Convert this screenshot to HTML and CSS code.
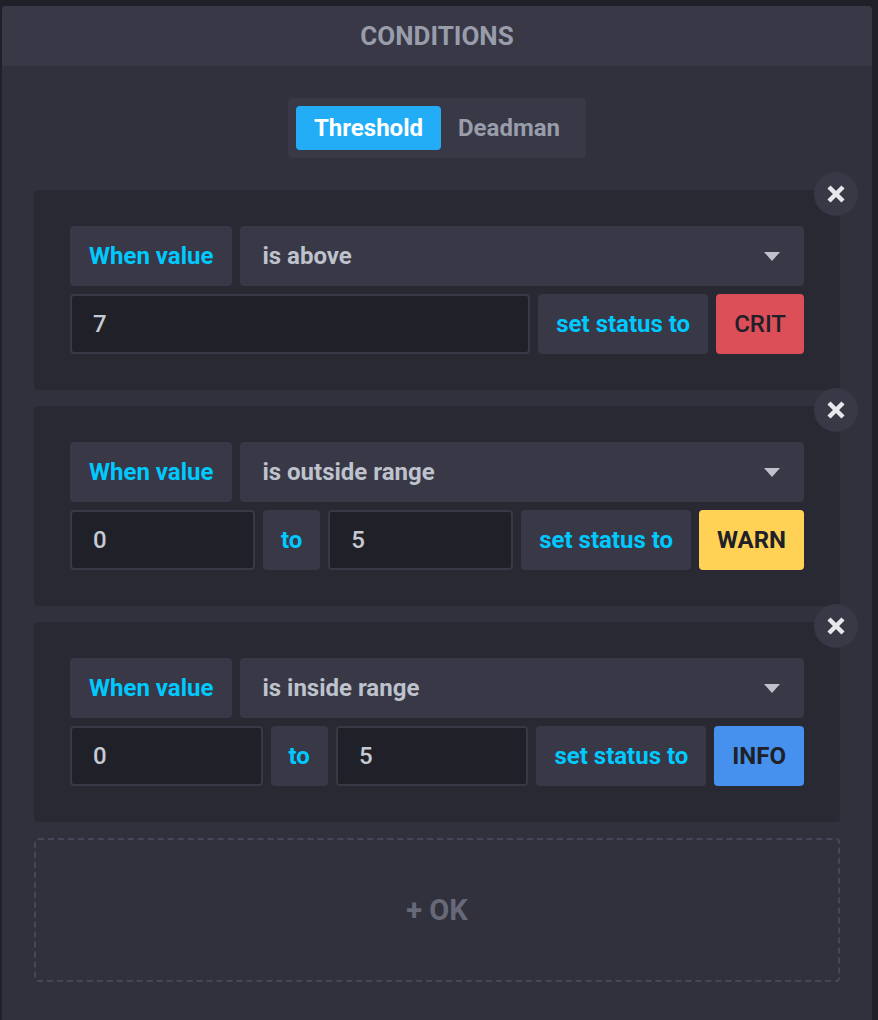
FILE: index.html
```html
<!DOCTYPE html>
<html>
<head>
<meta charset="utf-8">
<link rel="stylesheet" href="styles.css">
</head>
<body>
<div class="panel">
  <div class="panel-header">Conditions</div>
  <div class="panel-body">
    <div class="toggle-wrap">
      <div class="toggle">
        <div class="toggle-btn active">Threshold</div>
        <div class="toggle-btn">Deadman</div>
      </div>
    </div>

    <div class="card">
      <div class="close"><svg width="20" height="20" viewBox="0 0 20 20"><path d="M3 3 L17 17 M17 3 L3 17" stroke="#e7e8eb" stroke-width="4.5" stroke-linecap="butt"/></svg></div>
      <div class="row">
        <div class="label lead">When value</div>
        <div class="select"><span>is above</span><span class="caret"></span></div>
      </div>
      <div class="row">
        <div class="input">7</div>
        <div class="label">set status to</div>
        <div class="status crit">CRIT</div>
      </div>
    </div>

    <div class="card">
      <div class="close"><svg width="20" height="20" viewBox="0 0 20 20"><path d="M3 3 L17 17 M17 3 L3 17" stroke="#e7e8eb" stroke-width="4.5" stroke-linecap="butt"/></svg></div>
      <div class="row">
        <div class="label lead">When value</div>
        <div class="select"><span>is outside range</span><span class="caret"></span></div>
      </div>
      <div class="row">
        <div class="input">0</div>
        <div class="label">to</div>
        <div class="input">5</div>
        <div class="label">set status to</div>
        <div class="status warn">WARN</div>
      </div>
    </div>

    <div class="card">
      <div class="close"><svg width="20" height="20" viewBox="0 0 20 20"><path d="M3 3 L17 17 M17 3 L3 17" stroke="#e7e8eb" stroke-width="4.5" stroke-linecap="butt"/></svg></div>
      <div class="row">
        <div class="label lead">When value</div>
        <div class="select"><span>is inside range</span><span class="caret"></span></div>
      </div>
      <div class="row">
        <div class="input">0</div>
        <div class="label">to</div>
        <div class="input">5</div>
        <div class="label">set status to</div>
        <div class="status info">INFO</div>
      </div>
    </div>

    <div class="add">+ OK</div>
  </div>
</div>
</body>
</html>
```

FILE: styles.css
```css
html, body {
  margin: 0;
  padding: 0;
  background: #202028;
  font-family: Roboto, "Liberation Sans", sans-serif;
}

.panel {
  margin: 6px 6px 0 2px;
  border-radius: 4px 4px 0 0;
  background: #31313d;
}

.panel-header {
  height: 60px;
  background: #383846;
  border-radius: 4px 4px 0 0;
  display: flex;
  align-items: center;
  justify-content: center;
  color: #999dab;
  font-size: 26px;
  font-weight: 700;
  text-transform: uppercase;
}

.panel-body {
  padding: 32px 32px 48px;
  display: flex;
  flex-direction: column;
  gap: 16px;
}

.toggle-wrap {
  display: flex;
  justify-content: center;
  margin-bottom: 16px;
}

.toggle {
  display: flex;
  padding: 8px;
  background: #383846;
  border-radius: 4px;
}

.toggle-btn {
  height: 44px;
  padding: 0 17.5px;
  display: flex;
  align-items: center;
  font-size: 24px;
  font-weight: 700;
  color: #999dab;
  border-radius: 4px;
}

.toggle-btn.active {
  background: #22adf6;
  color: #ffffff;
}

.card {
  position: relative;
  background: #292933;
  border-radius: 4px;
  padding: 36px;
  display: flex;
  flex-direction: column;
  gap: 8px;
}

.close {
  position: absolute;
  top: -18px;
  right: -18px;
  width: 44px;
  height: 44px;
  border-radius: 50%;
  background: #383846;
  display: flex;
  align-items: center;
  justify-content: center;
}

.row {
  display: flex;
  gap: 8px;
  height: 60px;
}

.label {
  flex: none;
  background: #383846;
  border-radius: 4px;
  padding: 0 18px;
  display: flex;
  align-items: center;
  color: #00c9ff;
  font-size: 24px;
  font-weight: 700;
}

.label.lead {
  padding: 0 19px;
}

.select {
  flex: 1;
  background: #383846;
  border-radius: 4px;
  padding: 0 24px 0 22px;
  display: flex;
  align-items: center;
  justify-content: space-between;
  color: #bec2cc;
  font-size: 24px;
  font-weight: 700;
}

.caret {
  width: 0;
  height: 0;
  border-left: 8px solid transparent;
  border-right: 8px solid transparent;
  border-top: 9px solid #bec2cc;
}

.input {
  flex: 1;
  min-width: 0;
  box-sizing: border-box;
  background: #202028;
  border: 2px solid #383846;
  border-radius: 4px;
  padding: 0 21px;
  display: flex;
  align-items: center;
  color: #c6cad3;
  font-size: 24px;
  font-weight: 500;
}

.status {
  flex: none;
  border-radius: 4px;
  padding: 0 18px;
  display: flex;
  align-items: center;
  color: #202028;
  font-size: 24px;
  font-weight: 700;
}

.status.crit { background: #dc4e58; font-weight: 500; }
.status.warn { background: #ffd255; }
.status.info { background: #4591ed; }

.add {
  height: 144px;
  box-sizing: border-box;
  border: 2px dashed #45465a;
  border-radius: 4px;
  display: flex;
  align-items: center;
  justify-content: center;
  color: #676978;
  font-size: 29px;
  font-weight: 700;
}
```
